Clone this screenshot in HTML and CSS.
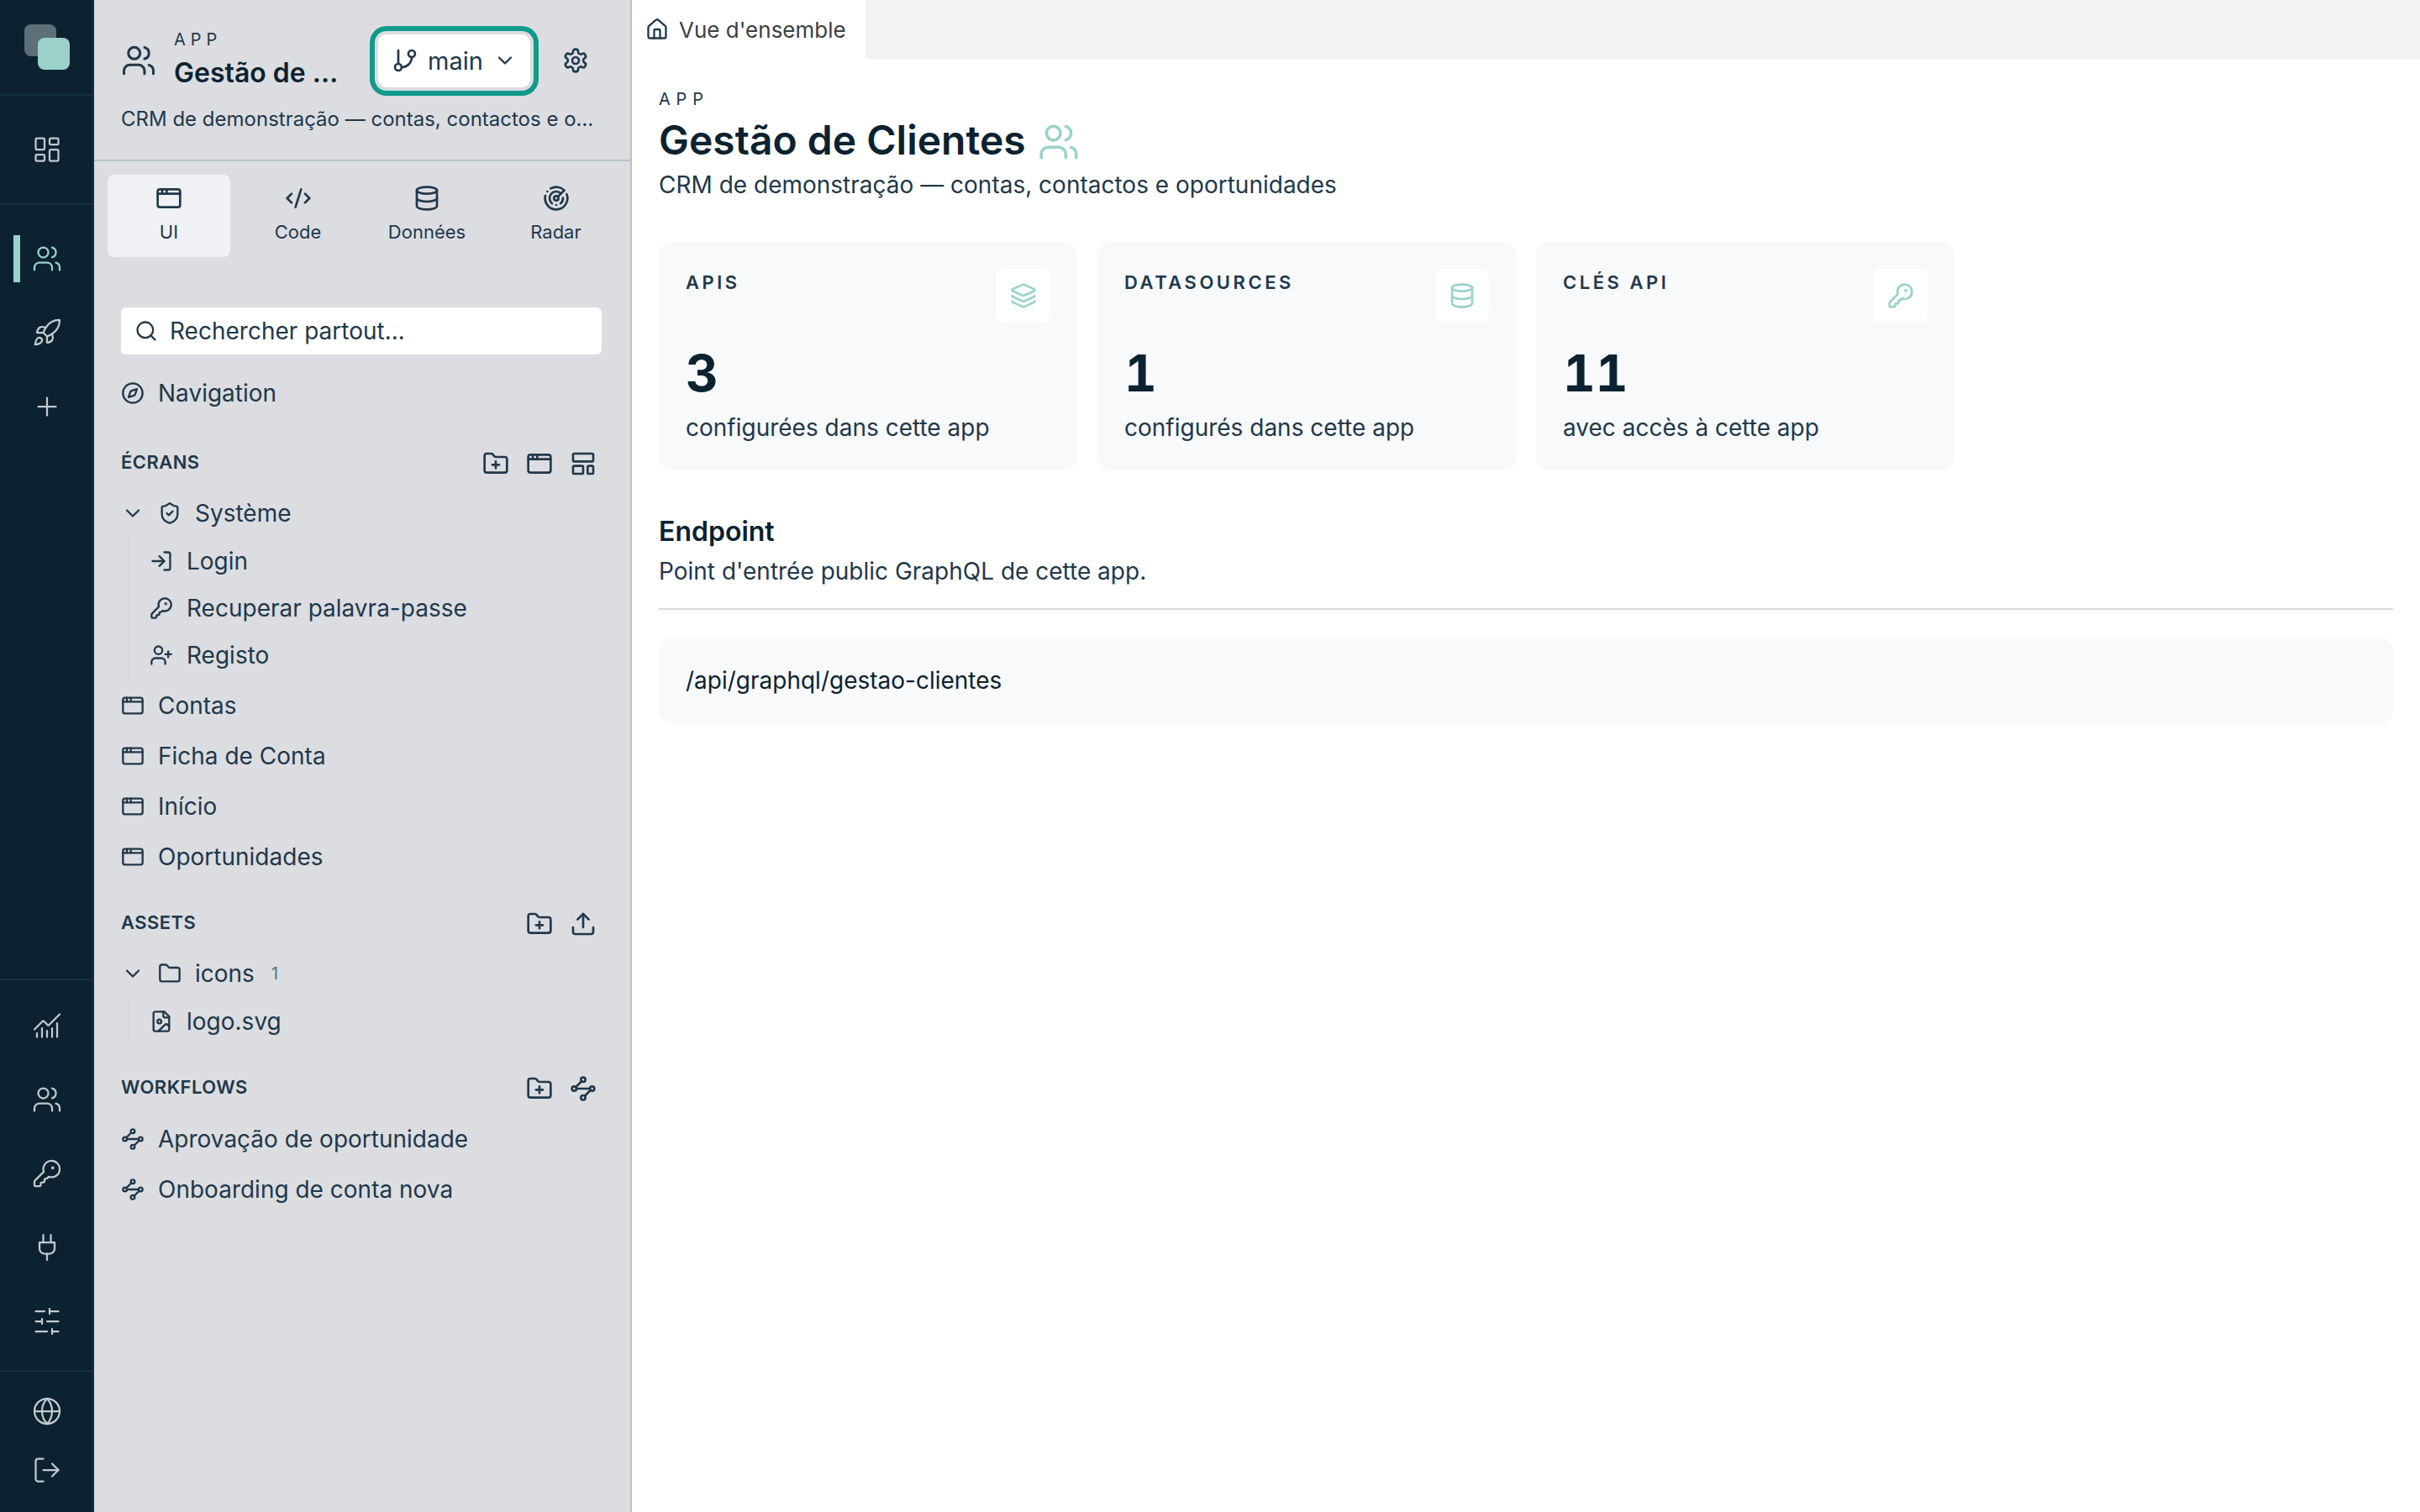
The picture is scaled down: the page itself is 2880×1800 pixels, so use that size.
FILE: index.html
```html
<!DOCTYPE html>
<html>
<head>
    <meta charset="utf-8">
    <title>Gestão de Clientes</title>
    <link rel="stylesheet" href="styles.css">
</head>
<body>
<svg class="sprite" xmlns="http://www.w3.org/2000/svg">
    <symbol id="i-dash" viewBox="0 0 24 24"><rect x="3" y="3" width="7" height="9" rx="1"/><rect x="14" y="3" width="7" height="5" rx="1"/><rect x="14" y="12" width="7" height="9" rx="1"/><rect x="3" y="16" width="7" height="5" rx="1"/></symbol>
    <symbol id="i-users" viewBox="0 0 24 24"><path d="M16 21v-2a4 4 0 0 0-4-4H6a4 4 0 0 0-4 4v2"/><circle cx="9" cy="7" r="4"/><path d="M22 21v-2a4 4 0 0 0-3-3.87"/><path d="M16 3.13a4 4 0 0 1 0 7.75"/></symbol>
    <symbol id="i-rocket" viewBox="0 0 24 24"><path d="M4.5 16.5c-1.5 1.26-2 5-2 5s3.74-.5 5-2c.71-.84.7-2.13-.09-2.91a2.18 2.18 0 0 0-2.91-.09z"/><path d="m12 15-3-3a22 22 0 0 1 2-3.95A12.88 12.88 0 0 1 22 2c0 2.72-.78 7.5-6 11a22.35 22.35 0 0 1-4 2z"/><path d="M9 12H4s.55-3.03 2-4c1.62-1.08 5 0 5 0"/><path d="M12 15v5s3.03-.55 4-2c1.08-1.62 0-5 0-5"/></symbol>
    <symbol id="i-plus" viewBox="0 0 24 24"><path d="M5 12h14"/><path d="M12 5v14"/></symbol>
    <symbol id="i-chart" viewBox="0 0 24 24"><path d="M12 16v5"/><path d="M16 14v7"/><path d="M20 10v11"/><path d="m22 3-8.646 8.646a.5.5 0 0 1-.708 0L9.354 8.354a.5.5 0 0 0-.708 0L2 15"/><path d="M4 18v3"/><path d="M8 14v7"/></symbol>
    <symbol id="i-key" viewBox="0 0 24 24"><path d="M2.586 17.414A2 2 0 0 0 2 18.828V21a1 1 0 0 0 1 1h3a1 1 0 0 0 1-1v-1a1 1 0 0 1 1-1h1a1 1 0 0 0 1-1v-1a1 1 0 0 1 1-1h.172a2 2 0 0 0 1.414-.586l.814-.814a6.5 6.5 0 1 0-4-4z"/><circle cx="16.5" cy="7.5" r=".5" fill="currentColor"/></symbol>
    <symbol id="i-plug" viewBox="0 0 24 24"><path d="M12 22v-5"/><path d="M9 8V2"/><path d="M15 8V2"/><path d="M18 8v5a4 4 0 0 1-4 4h-4a4 4 0 0 1-4-4V8Z"/></symbol>
    <symbol id="i-sliders" viewBox="0 0 24 24"><path d="M21 4h-7"/><path d="M10 4H3"/><path d="M21 12h-9"/><path d="M8 12H3"/><path d="M21 20h-5"/><path d="M12 20H3"/><path d="M14 2v4"/><path d="M8 10v4"/><path d="M16 18v4"/></symbol>
    <symbol id="i-globe" viewBox="0 0 24 24"><circle cx="12" cy="12" r="10"/><path d="M12 2a14.5 14.5 0 0 0 0 20 14.5 14.5 0 0 0 0-20"/><path d="M2 12h20"/></symbol>
    <symbol id="i-logout" viewBox="0 0 24 24"><path d="M9 21H5a2 2 0 0 1-2-2V5a2 2 0 0 1 2-2h4"/><path d="m16 17 5-5-5-5"/><path d="M21 12H9"/></symbol>
    <symbol id="i-branch" viewBox="0 0 24 24"><path d="M6 3v12"/><circle cx="18" cy="6" r="3"/><circle cx="6" cy="18" r="3"/><path d="M18 9a9 9 0 0 1-9 9"/></symbol>
    <symbol id="i-chevron" viewBox="0 0 24 24"><path d="m6 9 6 6 6-6"/></symbol>
    <symbol id="i-gear" viewBox="0 0 24 24"><path d="M12.22 2h-.44a2 2 0 0 0-2 2v.18a2 2 0 0 1-1 1.73l-.43.25a2 2 0 0 1-2 0l-.15-.08a2 2 0 0 0-2.73.73l-.22.38a2 2 0 0 0 .73 2.73l.15.1a2 2 0 0 1 1 1.72v.51a2 2 0 0 1-1 1.74l-.15.09a2 2 0 0 0-.73 2.73l.22.38a2 2 0 0 0 2.73.73l.15-.08a2 2 0 0 1 2 0l.43.25a2 2 0 0 1 1 1.73V20a2 2 0 0 0 2 2h.44a2 2 0 0 0 2-2v-.18a2 2 0 0 1 1-1.73l.43-.25a2 2 0 0 1 2 0l.15.08a2 2 0 0 0 2.73-.73l.22-.39a2 2 0 0 0-.73-2.73l-.15-.08a2 2 0 0 1-1-1.74v-.5a2 2 0 0 1 1-1.74l.15-.09a2 2 0 0 0 .73-2.73l-.22-.38a2 2 0 0 0-2.73-.73l-.15.08a2 2 0 0 1-2 0l-.43-.25a2 2 0 0 1-1-1.73V4a2 2 0 0 0-2-2z"/><circle cx="12" cy="12" r="3"/></symbol>
    <symbol id="i-window" viewBox="0 0 24 24"><rect x="2" y="4" width="20" height="16" rx="2"/><path d="M10 4v4"/><path d="M2 8h20"/><path d="M6 4v4"/></symbol>
    <symbol id="i-code" viewBox="0 0 24 24"><path d="m18 16 4-4-4-4"/><path d="m6 8-4 4 4 4"/><path d="m14.5 4-5 16"/></symbol>
    <symbol id="i-db" viewBox="0 0 24 24"><ellipse cx="12" cy="5" rx="9" ry="3"/><path d="M3 5V19A9 3 0 0 0 21 19V5"/><path d="M3 12A9 3 0 0 0 21 12"/></symbol>
    <symbol id="i-radar" viewBox="0 0 24 24"><path d="M19.07 4.93A10 10 0 0 0 6.99 3.34"/><path d="M4 6h.01"/><path d="M2.29 9.62A10 10 0 1 0 21.31 8.35"/><path d="M16.24 7.76A6 6 0 1 0 8.23 16.67"/><path d="M12 18h.01"/><path d="M17.99 11.66A6 6 0 0 1 15.77 16.67"/><circle cx="12" cy="12" r="2"/><path d="m13.41 10.59 5.66-5.66"/></symbol>
    <symbol id="i-search" viewBox="0 0 24 24"><path d="m21 21-4.34-4.34"/><circle cx="11" cy="11" r="8"/></symbol>
    <symbol id="i-compass" viewBox="0 0 24 24"><path d="m16.24 7.76-1.804 5.411a2 2 0 0 1-1.265 1.265L7.76 16.24l1.804-5.411a2 2 0 0 1 1.265-1.265z"/><circle cx="12" cy="12" r="10"/></symbol>
    <symbol id="i-folder-plus" viewBox="0 0 24 24"><path d="M12 10v6"/><path d="M9 13h6"/><path d="M20 20a2 2 0 0 0 2-2V8a2 2 0 0 0-2-2h-7.9a2 2 0 0 1-1.69-.9L9.6 3.9A2 2 0 0 0 7.93 3H4a2 2 0 0 0-2 2v13a2 2 0 0 0 2 2Z"/></symbol>
    <symbol id="i-template" viewBox="0 0 24 24"><rect x="3" y="3" width="18" height="7" rx="1"/><rect x="3" y="14" width="9" height="7" rx="1"/><rect x="16" y="14" width="5" height="7" rx="1"/></symbol>
    <symbol id="i-shield" viewBox="0 0 24 24"><path d="M20 13c0 5-3.5 7.5-7.66 8.95a1 1 0 0 1-.67-.01C7.5 20.5 4 18 4 13V6a1 1 0 0 1 1-1c2 0 4.5-1.2 6.24-2.72a1.17 1.17 0 0 1 1.52 0C14.51 3.81 17 5 19 5a1 1 0 0 1 1 1z"/><path d="m9 12 2 2 4-4"/></symbol>
    <symbol id="i-login" viewBox="0 0 24 24"><path d="m10 17 5-5-5-5"/><path d="M15 12H3"/><path d="M15 3h4a2 2 0 0 1 2 2v14a2 2 0 0 1-2 2h-4"/></symbol>
    <symbol id="i-user-plus" viewBox="0 0 24 24"><path d="M16 21v-2a4 4 0 0 0-4-4H6a4 4 0 0 0-4 4v2"/><circle cx="9" cy="7" r="4"/><path d="M19 8v6"/><path d="M22 11h-6"/></symbol>
    <symbol id="i-upload" viewBox="0 0 24 24"><path d="M12 3v12"/><path d="m17 8-5-5-5 5"/><path d="M21 15v4a2 2 0 0 1-2 2H5a2 2 0 0 1-2-2v-4"/></symbol>
    <symbol id="i-waypoints" viewBox="0 0 24 24"><circle cx="12" cy="4" r="2"/><path d="m10.6 5.4-5.2 5.2"/><circle cx="4" cy="12" r="2"/><path d="M6 12h12"/><circle cx="20" cy="12" r="2"/><path d="m13.4 18.6 5.2-5.2"/><circle cx="12" cy="20" r="2"/></symbol>
    <symbol id="i-folder" viewBox="0 0 24 24"><path d="M20 20a2 2 0 0 0 2-2V8a2 2 0 0 0-2-2h-7.9a2 2 0 0 1-1.69-.9L9.6 3.9A2 2 0 0 0 7.93 3H4a2 2 0 0 0-2 2v13a2 2 0 0 0 2 2Z"/></symbol>
    <symbol id="i-file-image" viewBox="0 0 24 24"><path d="M15 2H6a2 2 0 0 0-2 2v16a2 2 0 0 0 2 2h12a2 2 0 0 0 2-2V7Z"/><path d="M14 2v4a2 2 0 0 0 2 2h4"/><circle cx="10" cy="12" r="2"/><path d="m20 17-1.296-1.296a2.41 2.41 0 0 0-3.408 0L9 22"/></symbol>
    <symbol id="i-layers" viewBox="0 0 24 24"><path d="M12.83 2.18a2 2 0 0 0-1.66 0L2.6 6.08a1 1 0 0 0 0 1.83l8.58 3.91a2 2 0 0 0 1.66 0l8.58-3.9a1 1 0 0 0 0-1.83z"/><path d="M2 12a1 1 0 0 0 .58.91l8.6 3.91a2 2 0 0 0 1.65 0l8.58-3.9A1 1 0 0 0 22 12"/><path d="M2 17a1 1 0 0 0 .58.91l8.6 3.91a2 2 0 0 0 1.65 0l8.58-3.9A1 1 0 0 0 22 17"/></symbol>
    <symbol id="i-house" viewBox="0 0 24 24"><path d="M15 21v-8a1 1 0 0 0-1-1h-4a1 1 0 0 0-1 1v8"/><path d="M3 10a2 2 0 0 1 .709-1.528l7-5.999a2 2 0 0 1 2.582 0l7 5.999A2 2 0 0 1 21 10v9a2 2 0 0 1-2 2H5a2 2 0 0 1-2-2z"/></symbol>
</svg>

<div class="app">
    <!-- barre d'icones -->
    <nav class="rail">
        <div class="rail-logo"><div class="logo"><span class="logo-back"></span><span class="logo-front"></span></div></div>
        <div class="rail-group rail-dash">
            <div class="rail-item"><svg class="ico-rail"><use href="#i-dash"/></svg></div>
        </div>
        <div class="rail-group rail-apps">
            <div class="rail-item is-active"><svg class="ico-rail"><use href="#i-users"/></svg></div>
            <div class="rail-item"><svg class="ico-rail"><use href="#i-rocket"/></svg></div>
            <div class="rail-item"><svg class="ico-rail"><use href="#i-plus"/></svg></div>
        </div>
        <div class="rail-group rail-tools">
            <div class="rail-item"><svg class="ico-rail"><use href="#i-chart"/></svg></div>
            <div class="rail-item"><svg class="ico-rail"><use href="#i-users"/></svg></div>
            <div class="rail-item"><svg class="ico-rail"><use href="#i-key"/></svg></div>
            <div class="rail-item"><svg class="ico-rail"><use href="#i-plug"/></svg></div>
            <div class="rail-item"><svg class="ico-rail"><use href="#i-sliders"/></svg></div>
        </div>
        <div class="rail-group rail-foot">
            <div class="rail-item"><svg class="ico-rail"><use href="#i-globe"/></svg></div>
            <div class="rail-item"><svg class="ico-rail"><use href="#i-logout"/></svg></div>
        </div>
    </nav>

    <!-- panneau de l'app -->
    <aside class="panel">
        <header class="panel-head">
            <div class="head-row">
                <svg class="ico-head"><use href="#i-users"/></svg>
                <div class="head-title">
                    <div class="eyebrow">APP</div>
                    <div class="head-name">Gestão de …</div>
                </div>
                <button class="branch">
                    <svg class="ico-md"><use href="#i-branch"/></svg>
                    <span>main</span>
                    <svg class="ico-chev"><use href="#i-chevron"/></svg>
                </button>
                <svg class="ico-md ico-gear"><use href="#i-gear"/></svg>
            </div>
            <p class="head-desc">CRM de demonstração — contas, contactos e o…</p>
        </header>

        <div class="tabs">
            <div class="tab is-active"><svg class="ico-md"><use href="#i-window"/></svg><span>UI</span></div>
            <div class="tab"><svg class="ico-md"><use href="#i-code"/></svg><span>Code</span></div>
            <div class="tab"><svg class="ico-md"><use href="#i-db"/></svg><span>Données</span></div>
            <div class="tab"><svg class="ico-md"><use href="#i-radar"/></svg><span>Radar</span></div>
        </div>

        <div class="panel-body">
            <div class="search"><svg class="ico-tree"><use href="#i-search"/></svg><span>Rechercher partout...</span></div>
            <div class="row row-nav"><svg class="ico-tree"><use href="#i-compass"/></svg><span>Navigation</span></div>

            <section class="section">
                <div class="section-head">
                    <h2>ÉCRANS</h2>
                    <div class="actions">
                        <svg class="ico-md"><use href="#i-folder-plus"/></svg>
                        <svg class="ico-md"><use href="#i-window"/></svg>
                        <svg class="ico-md"><use href="#i-template"/></svg>
                    </div>
                </div>
                <div class="row row-folder"><svg class="ico-chev"><use href="#i-chevron"/></svg><svg class="ico-tree"><use href="#i-shield"/></svg><span>Système</span></div>
                <div class="nested">
                    <div class="row row-sub"><svg class="ico-tree"><use href="#i-login"/></svg><span>Login</span></div>
                    <div class="row row-sub"><svg class="ico-tree"><use href="#i-key"/></svg><span>Recuperar palavra-passe</span></div>
                    <div class="row row-sub"><svg class="ico-tree"><use href="#i-user-plus"/></svg><span>Registo</span></div>
                </div>
                <div class="row"><svg class="ico-tree"><use href="#i-window"/></svg><span>Contas</span></div>
                <div class="row"><svg class="ico-tree"><use href="#i-window"/></svg><span>Ficha de Conta</span></div>
                <div class="row"><svg class="ico-tree"><use href="#i-window"/></svg><span>Início</span></div>
                <div class="row"><svg class="ico-tree"><use href="#i-window"/></svg><span>Oportunidades</span></div>
            </section>

            <section class="section">
                <div class="section-head">
                    <h2>ASSETS</h2>
                    <div class="actions">
                        <svg class="ico-md"><use href="#i-folder-plus"/></svg>
                        <svg class="ico-md"><use href="#i-upload"/></svg>
                    </div>
                </div>
                <div class="row row-folder"><svg class="ico-chev"><use href="#i-chevron"/></svg><svg class="ico-tree"><use href="#i-folder"/></svg><span>icons</span><em class="count">1</em></div>
                <div class="nested">
                    <div class="row row-sub"><svg class="ico-tree"><use href="#i-file-image"/></svg><span>logo.svg</span></div>
                </div>
            </section>

            <section class="section">
                <div class="section-head">
                    <h2>WORKFLOWS</h2>
                    <div class="actions">
                        <svg class="ico-md"><use href="#i-folder-plus"/></svg>
                        <svg class="ico-md"><use href="#i-waypoints"/></svg>
                    </div>
                </div>
                <div class="row"><svg class="ico-tree"><use href="#i-waypoints"/></svg><span>Aprovação de oportunidade</span></div>
                <div class="row"><svg class="ico-tree"><use href="#i-waypoints"/></svg><span>Onboarding de conta nova</span></div>
            </section>
        </div>
    </aside>

    <!-- contenu -->
    <main class="main">
        <div class="tabbar">
            <div class="doc-tab"><svg class="ico-tree"><use href="#i-house"/></svg><span>Vue d'ensemble</span></div>
        </div>
        <div class="content">
            <div class="eyebrow">APP</div>
            <h1 class="title">Gestão de Clientes <svg class="ico-title"><use href="#i-users"/></svg></h1>
            <p class="subtitle">CRM de demonstração — contas, contactos e oportunidades</p>

            <div class="cards">
                <div class="card">
                    <div class="card-head"><span class="card-label">APIS</span><span class="card-ico"><svg class="ico-md"><use href="#i-layers"/></svg></span></div>
                    <div class="card-num">3</div>
                    <div class="card-sub">configurées dans cette app</div>
                </div>
                <div class="card">
                    <div class="card-head"><span class="card-label">DATASOURCES</span><span class="card-ico"><svg class="ico-md"><use href="#i-db"/></svg></span></div>
                    <div class="card-num">1</div>
                    <div class="card-sub">configurés dans cette app</div>
                </div>
                <div class="card">
                    <div class="card-head"><span class="card-label">CLÉS API</span><span class="card-ico"><svg class="ico-md"><use href="#i-key"/></svg></span></div>
                    <div class="card-num">11</div>
                    <div class="card-sub">avec accès à cette app</div>
                </div>
            </div>

            <h3 class="endpoint-title">Endpoint</h3>
            <p class="endpoint-desc">Point d'entrée public GraphQL de cette app.</p>
            <div class="rule"></div>
            <div class="endpoint-url">/api/graphql/gestao-clientes</div>
        </div>
    </main>
</div>
</body>
</html>
```

FILE: styles.css
```css
html, body{
    margin: 0;
    padding: 0;
    height: 100%;
}
body{
    background: #fff;
    font-family: "Inter", "Noto Sans", sans-serif;
    color: #0c2230;
}
h1, h2, h3, p{ margin: 0; }
.sprite{ display: none; }
svg{
    fill: none;
    stroke: currentColor;
    stroke-width: 2;
    stroke-linecap: round;
    stroke-linejoin: round;
    flex: none;
}
.app{
    display: flex;
    height: 100%;
}

/* icon sizes */
.ico-rail{ width: 36px; height: 36px; stroke-width: 1.5; }
.ico-head{ width: 42px; height: 42px; stroke-width: 1.75; }
.ico-md{ width: 32px; height: 32px; stroke-width: 2; }
.ico-tree{ width: 28px; height: 28px; stroke-width: 2; }
.ico-chev{ width: 28px; height: 28px; stroke-width: 2; }
.ico-title{ width: 50px; height: 50px; stroke-width: 1.75; color: #9ad2c9; margin-left: 2px; vertical-align: -10px; }

/* rail */
.rail{
    width: 112px;
    flex: none;
    display: flex;
    flex-direction: column;
    background: #0c2230;
    box-shadow: inset -2px 0 0 #14303f;
    color: #c3cacd;
}
.rail-logo{ height: 112px; padding: 29px 0 0 29px; box-sizing: border-box; }
.logo{ position: relative; width: 54px; height: 54px; }
.logo-back, .logo-front{ position: absolute; width: 38px; height: 38px; border-radius: 8px; }
.logo-back{ left: 0; top: 0; background: #5f6f7a; }
.logo-front{ left: 16px; top: 16px; background: #9ad2c9; }
.rail-group{ border-top: 2px solid #14303f; }
.rail-dash{ height: 128px; display: flex; flex-direction: column; justify-content: center; }
.rail-apps{ flex: 1; padding-top: 20px; }
.rail-tools{ padding: 10px 0 14px; }
.rail-foot{ height: 169px; box-sizing: border-box; padding-top: 12px; }
.rail-foot .rail-item{ height: 70px; }
.rail-item{
    position: relative;
    height: 88px;
    display: flex;
    align-items: center;
    justify-content: center;
}
.rail-item.is-active{ color: #9ad2c9; }
.rail-item.is-active::before{
    content: "";
    position: absolute;
    left: 16px;
    top: 16px;
    width: 8px;
    height: 56px;
    background: #9ad2c9;
}

/* panneau */
.panel{
    width: 640px;
    flex: none;
    box-sizing: border-box;
    border-right: 2px solid #b9bfc9;
    background: #dcdde1;
    color: #21384a;
}
.panel-head{
    height: 192px;
    box-sizing: border-box;
    padding: 33px 32px 0;
    border-bottom: 2px solid #b9c1ca;
}
.head-row{ display: flex; align-items: center; }
.head-title{ width: 218px; margin: 0 25px 0 21px; flex: none; }
.eyebrow{
    font-size: 20px;
    line-height: 30px;
    letter-spacing: 0.3em;
    color: #21384a;
}
.head-title .eyebrow{ line-height: 28px; margin-bottom: 2px; }
.content .eyebrow{ letter-spacing: 0.34em; }
.head-name{
    font-size: 32px;
    line-height: 48px;
    font-weight: 600;
    color: #0c2230;
    white-space: nowrap;
}
.branch{
    width: 181px;
    height: 63px;
    flex: none;
    display: flex;
    align-items: center;
    gap: 11px;
    padding: 0 0 0 16px;
    box-sizing: border-box;
    border: none;
    border-radius: 10px;
    background: #fff;
    /* anneau de focus */
    box-shadow: 0 0 0 4px #dcdde1, 0 0 0 10px #0f9a8b;
    font-family: inherit;
    font-size: 29px;
    color: #21384a;
}
.branch .ico-chev{ margin-left: 1px; }
.ico-gear{ margin-left: 38px; }
.head-desc{
    margin-top: 13px;
    font-size: 24px;
    line-height: 36px;
    white-space: nowrap;
}
.tabs{
    display: flex;
    gap: 7.5px;
    margin: 16px 16px 0;
    padding-bottom: 17px;
    border-bottom: 2px solid #d5d9de;
}
.tab{
    width: 146px;
    height: 98px;
    flex: none;
    box-sizing: border-box;
    padding-top: 12px;
    display: flex;
    flex-direction: column;
    align-items: center;
    gap: 9px;
    border-radius: 8px;
    font-size: 22px;
    line-height: 30px;
}
.tab.is-active{ background: #eff1f5; }
.panel-body{ padding: 41px 34px 0 32px; }
.search{
    height: 56px;
    display: flex;
    align-items: center;
    gap: 14px;
    padding-left: 16px;
    background: #fff;
    border-radius: 6px;
    font-size: 28px;
    color: #21384a;
}
.row{
    height: 60px;
    display: flex;
    align-items: center;
    gap: 16px;
    font-size: 28px;
}
.row-nav{ margin-top: 16px; }
.row-folder{ height: 58px; gap: 16px; }
.row-sub{ height: 56px; }
.nested{
    margin: 0 0 2px 8px;
    padding-left: 24px;
    border-left: 2px solid #d5d8dc;
}
.count{
    font-style: normal;
    font-size: 20px;
    margin-left: 4px;
    color: #5c6f7c;
}
.section{ padding-top: 28px; }
.row-nav + .section{ padding-top: 32px; }
.section-head{
    height: 40px;
    margin-bottom: 12px;
    display: flex;
    align-items: center;
    justify-content: space-between;
}
.section-head h2{
    font-size: 22px;
    font-weight: 600;
    letter-spacing: 0.02em;
}
.actions{ display: flex; gap: 20px; margin: 3px 6px 0 0; }

/* contenu */
.main{ flex: 1; min-width: 0; }
.tabbar{ height: 70px; background: #f2f2f2; display: flex; }
.doc-tab{
    width: 278px;
    box-sizing: border-box;
    display: flex;
    align-items: center;
    gap: 12px;
    padding-left: 16px;
    background: #fff;
    font-size: 26px;
    color: #3a3f45;
}
.doc-tab svg{ color: #21384a; }
.content{ padding: 33px 32px 0; }
.title{
    font-size: 48px;
    line-height: 68px;
    font-weight: 600;
}
.subtitle{
    font-size: 28px;
    line-height: 38px;
    color: #21384a;
}
.cards{
    display: flex;
    gap: 24px;
    margin-top: 49px;
}
.card{
    width: 498px;
    height: 272px;
    box-sizing: border-box;
    padding: 32px;
    background: #f8f9fb;
    border-radius: 16px;
}
.card-head{ display: flex; justify-content: space-between; height: 64px; }
.card-label{
    font-size: 22px;
    line-height: 32px;
    font-weight: 600;
    letter-spacing: 0.16em;
    color: #21384a;
}
.card-ico{
    width: 64px;
    height: 64px;
    display: flex;
    align-items: center;
    justify-content: center;
    background: #fff;
    border-radius: 8px;
    color: #9ad2c9;
}
.card-num{
    margin-top: 24px;
    font-size: 60px;
    line-height: 72px;
    font-weight: 700;
    font-variant-numeric: tabular-nums;
}
.card-sub{
    margin-top: 9px;
    font-size: 28px;
    line-height: 40px;
    color: #21384a;
}
.endpoint-title{
    margin-top: 51px;
    font-size: 32px;
    line-height: 44px;
    font-weight: 600;
}
.endpoint-desc{
    margin-top: 5px;
    font-size: 28px;
    line-height: 40px;
    color: #21384a;
}
.rule{ height: 2px; margin-top: 24px; background: #d8dbe0; }
.endpoint-url{
    margin-top: 33px;
    height: 102px;
    box-sizing: border-box;
    padding: 0 32px;
    display: flex;
    align-items: center;
    background: #f8f9fb;
    border-radius: 16px;
    font-size: 28px;
    color: #0c2230;
}
```
